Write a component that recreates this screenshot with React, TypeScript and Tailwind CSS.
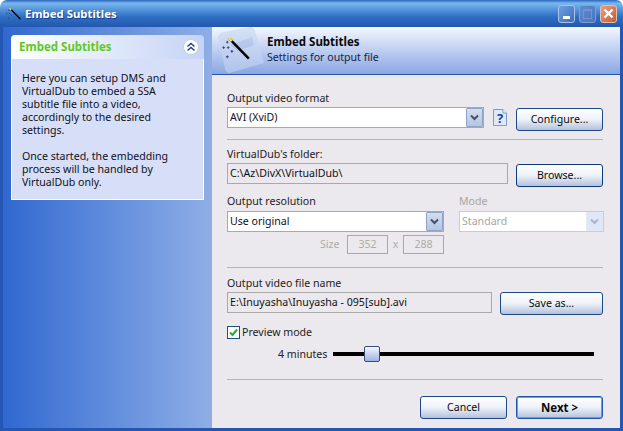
const FONT = "font-['Noto_Sans','Roboto',sans-serif]";

function Btn({ children, strong, className }: { children: string; strong?: boolean; className: string }) {
  return (
    <div
      className={`h-[23px] shrink-0 rounded-[3px] border border-[#1b4a85] bg-gradient-to-b from-white via-[#eef1f8] to-[#b3c2dc] flex items-center justify-center text-[10.600px] text-[#0a0a0a] ${strong ? "font-bold text-[11.500px] border-[#2058b0] shadow-[inset_0_0_0_1px_#6f9be0]" : ""} ${className}`}
    >
      {children}
    </div>
  );
}

function Chevron({ color }: { color: string }) {
  return (
    <svg width="9" height="7" viewBox="0 0 9 7">
      <path d="M1 1.500 L4.500 5 L8 1.500" fill="none" stroke={color} strokeWidth="2" />
    </svg>
  );
}

function Combo({ text, w, disabled }: { text: string; w: string; disabled?: boolean }) {
  return (
    <div
      className={`${w} h-[21px] shrink-0 border flex items-center bg-white ${disabled ? "border-[#cdcbc6] text-[#a8a6a0]" : "border-[#a9a9a9] text-[#111]"}`}
    >
      <span className="flex-1 pl-[2px] text-[10.600px] leading-none">{text}</span>
      <div
        className={`w-[17px] h-[19px] rounded-[1px] border flex items-center justify-center ${disabled ? "border-[#e3e8f5] bg-[#dfe6f7]" : "border-[#8da5c8] bg-gradient-to-b from-[#d3dded] to-[#b4c6e2]"}`}
      >
        <Chevron color={disabled ? "#aab4c6" : "#44526e"} />
      </div>
    </div>
  );
}

function Field({ text, w }: { text: string; w: string }) {
  return (
    <div className={`${w} h-[21px] shrink-0 border border-[#a9a9a9] flex items-center pl-[2px] text-[10.600px] text-[#111]`}>
      {text}
    </div>
  );
}

function Sep({ className }: { className: string }) {
  return <div className={`h-px bg-[#b4b2b4] w-[376px] ${className}`} />;
}

function Sparkles() {
  return (
    <g fill="#3a3a80">
      <path d="M5 3h1v3h-1zM4 4h3v1h-3z" />
      <path d="M1 9h1v3h-1zM0 10h3v1h-3z" />
      <path d="M6 9h1v3h-1zM5 10h3v1h-3z" />
      <path d="M10 13h1v3h-1zM9 14h3v1h-3z" />
      <path d="M5 19h1v3h-1zM4 20h3v1h-3z" />
    </g>
  );
}

function Wand({ size }: { size: number }) {
  return (
    <svg width={size} height={Math.round((size * 24) / 30)} viewBox="0 0 30 24">
      <path d="M7.500 0.500 L29 22.500" stroke="#000" strokeWidth="2.800" />
      <path d="M7 0 L10.500 3.500" stroke="#e8e060" strokeWidth="2.800" />
      <Sparkles />
    </svg>
  );
}

export default function App() {
  return (
    <div className={`${FONT} w-[623px] h-[431px] overflow-hidden flex flex-col bg-white text-[10.600px] leading-none`}>
      {/* Title bar */}
      <div className="h-[27px] shrink-0 rounded-t-[7px] bg-[linear-gradient(180deg,#2e65bd_0%,#79b8ee_12%,#5c9de0_30%,#2f6fc4_62%,#2158ae_100%)] flex items-center pl-[6px] pr-[6px]">
        <Wand size={15} />
        <span className="ml-[4px] mt-[1px] font-bold text-[11.400px] text-white [text-shadow:1px_1px_0_#1a3f86]">Embed Subtitles</span>
        <div className="ml-auto flex gap-[4px] items-center">
          <div className="w-[17px] h-[18px] rounded-[3px] border border-[#a9c4e8] bg-gradient-to-br from-[#6d9fdd] to-[#3a6ec0] flex items-end justify-center pb-[3px]">
            <div className="w-[7px] h-[3px] bg-white" />
          </div>
          <div className="w-[17px] h-[18px] rounded-[3px] border border-[#7f9fcf] bg-gradient-to-br from-[#5f8ccd] to-[#4a75bd] flex items-center justify-center">
            <div className="w-[9px] h-[10px] border border-[#7a90d4] border-t-2" />
          </div>
          <div className="w-[17px] h-[18px] rounded-[3px] border border-[#d9c4b8] bg-gradient-to-br from-[#e9a07c] to-[#d0542c] flex items-center justify-center">
            <svg width="11" height="11" viewBox="0 0 11 11">
              <path d="M1.500 1.500 L9.500 9.500 M9.500 1.500 L1.500 9.500" stroke="#fff" strokeWidth="2.400" />
            </svg>
          </div>
        </div>
      </div>

      {/* Window body */}
      <div className="flex-1 flex min-h-0 border-x-[3px] border-b-[3px] border-[#2456b4]">
        {/* Sidebar */}
        <div className="w-[209px] shrink-0 bg-gradient-to-r from-[#3068d0] to-[#8faee6] pt-[8px] pl-[8px]">
          <div className="w-[193px]">
            <div className="h-[24px] rounded-t-[4px] bg-gradient-to-r from-white to-[#c6d3f6] flex items-center pl-[8px] pr-[5px]">
              <span className="font-bold text-[11.500px] text-[#5fc91e]">Embed Subtitles</span>
              <div className="ml-auto w-[16px] h-[16px] rounded-full bg-white border border-[#c3cfe8] flex items-center justify-center">
                <svg width="10" height="10" viewBox="0 0 10 10">
                  <path d="M1.500 4.500 L5 1.500 L8.500 4.500 M1.500 8.500 L5 5.500 L8.500 8.500" fill="none" stroke="#21448e" strokeWidth="1.500" />
                </svg>
              </div>
            </div>
            <div className="h-[141px] bg-[#d6dff7] border-x border-b border-white pl-[10px] pr-[6px] pt-[13px] text-[10.600px] leading-[13px] text-[#101020]">
              <p>Here you can setup DMS and<br />VirtualDub to embed a SSA<br />subtitle file into a video,<br />accordingly to the desired<br />settings.</p>
              <p className="mt-[13px]">Once started, the embedding<br />process will be handled by<br />VirtualDub only.</p>
            </div>
          </div>
        </div>

        {/* Content */}
        <div className="flex-1 min-w-0 bg-[#ebe9ed] flex flex-col">
          {/* Header */}
          <div className="relative h-[48px] shrink-0 bg-gradient-to-b from-[#f4f7fd] to-[#8aa6e2] border-b border-[#2456b4] flex overflow-hidden">
            <div className="w-[55px] shrink-0 flex items-center">
              <svg width="52" height="46" viewBox="0 0 52 46" className="absolute left-0 top-0 opacity-60">
                <path d="M6 10 Q7 6 12 5 L38 0 Q42 0 43 4 L52 36 L18 46 Q14 46 13 42 Z" fill="#c6d5f2" />
                <path d="M18 18 L40 10 L42 18 L26 24 Z" fill="#a7bde6" />
              </svg>
              <div className="relative ml-[10px] mb-[4px]">
                <Wand size={28} />
              </div>
            </div>
            <div className="pt-[8px]">
              <div className="font-bold text-[11.500px] text-[#0a0a0a] leading-[13px]">Embed Subtitles</div>
              <div className="text-[10.600px] text-[#15233f] mt-[3px] leading-[13px]">Settings for output file</div>
            </div>
          </div>

          {/* Form */}
          <div className="pl-[15px] pt-[15px]">
            <div className="h-[17px] leading-[16px] text-[#222]">Output video format</div>
            <div className="flex items-start h-[24px]">
              <Combo text="AVI (XviD)" w="w-[257px]" />
              <svg width="14" height="17" viewBox="0 0 14 17" className="ml-[9px] mt-[2px] shrink-0">
                <path d="M0.500 0.500 H10 L13.500 4 V16.500 H0.500 Z" fill="#dfe8f6" stroke="#7f9cc6" />
                <path d="M10 0.500 V4 H13.500" fill="#fff" stroke="#7f9cc6" />
                <text x="7" y="13.500" textAnchor="middle" fontSize="13" fontWeight="700" fill="#1d3fa0">?</text>
              </svg>
              <Btn className="ml-[9px] mt-[1px] w-[87px]">Configure...</Btn>
            </div>
            <Sep className="mt-[8px]" />

            <div className="h-[15px] mt-[7px] leading-[14px] text-[#222]">VirtualDub's folder:</div>
            <div className="flex items-start h-[24px] mt-px">
              <Field text="C:\Az\DivX\VirtualDub\" w="w-[281px]" />
              <Btn className="ml-[8px] mt-[1px] w-[87px] border-[#10397a]">Browse...</Btn>
            </div>

            <div className="flex mt-[7px]">
              <div>
                <div className="h-[17px] leading-[15px] text-[#222]">Output resolution</div>
                <Combo text="Use original" w="w-[217px]" />
                <div className="flex items-center h-[19px] mt-[3px] text-[#aeaca8]">
                  <span className="ml-[93px] w-[27px]">Size</span>
                  <div className="w-[41px] h-[19px] border border-[#a9a9a9] flex items-center justify-center">352</div>
                  <span className="w-[15px] text-center">x</span>
                  <div className="w-[41px] h-[19px] border border-[#a9a9a9] flex items-center justify-center">288</div>
                </div>
              </div>
              <div className="ml-[15px]">
                <div className="h-[17px] leading-[15px] text-[#a8a6a0]">Mode</div>
                <Combo text="Standard" w="w-[145px]" disabled />
              </div>
            </div>

            <Sep className="mt-[13px]" />

            <div className="h-[16px] mt-[8px] leading-[14px] text-[#222]">Output video file name</div>
            <div className="flex items-start h-[24px]">
              <Field text="E:\Inuyasha\Inuyasha - 095[sub].avi" w="w-[265px]" />
              <Btn className="ml-[8px] w-[103px]">Save as...</Btn>
            </div>

            <div className="flex items-center mt-[9px] h-[14px]">
              <div className="w-[13px] h-[13px] border border-[#1c5180] bg-white flex items-center justify-center">
                <svg width="9" height="9" viewBox="0 0 9 9">
                  <path d="M1 4.500 L3.500 7 L8 1.500" fill="none" stroke="#29a83e" strokeWidth="2" />
                </svg>
              </div>
              <span className="ml-[2px] text-[#222]">Preview mode</span>
            </div>

            <div className="flex items-center h-[16px] mt-[7px]">
              <span className="ml-[51px] w-[55px] text-[#222]">4 minutes</span>
              <div className="relative w-[261px] h-[4px] bg-black">
                <div className="absolute left-[31px] top-[-6px] w-[16px] h-[16px] rounded-[2px] border border-[#3c4a72] bg-gradient-to-b from-[#f4f6fc] to-[#9bb2e2]" />
              </div>
            </div>

            <Sep className="mt-[17px]" />

            <div className="flex mt-[16px] ml-[193px] gap-[9px]">
              <Btn className="w-[87px]">Cancel</Btn>
              <Btn strong className="w-[87px]">Next &gt;</Btn>
            </div>
          </div>
        </div>
      </div>
    </div>
  );
}
